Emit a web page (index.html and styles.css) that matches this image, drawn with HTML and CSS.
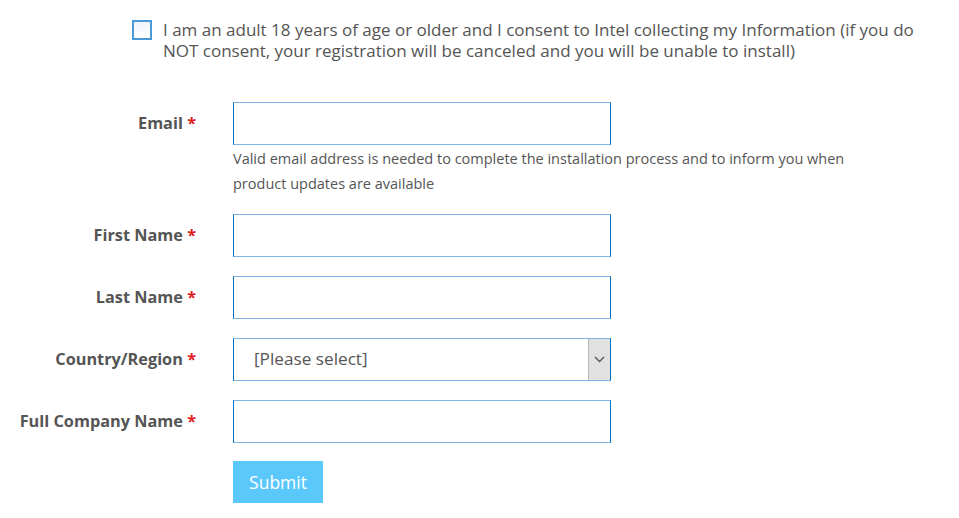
FILE: index.html
```html
<!DOCTYPE html>
<html>
<head>
<meta charset="utf-8">
<link rel="stylesheet" href="styles.css">
</head>
<body>
<div class="page">
  <label class="consent">
    <span class="checkbox"></span>
    <span class="consent-text">I am an adult 18 years of age or older and I consent to Intel collecting my Information (if you do NOT consent, your registration will be canceled and you will be unable to install)</span>
  </label>

  <form class="form">
    <div class="row">
      <div class="label">Email <span class="req">*</span></div>
      <div class="field">
        <input class="input" type="text">
        <p class="help">Valid email address is needed to complete the installation process and to inform you when product updates are available</p>
      </div>
    </div>
    <div class="row">
      <div class="label">First Name <span class="req">*</span></div>
      <div class="field"><input class="input" type="text"></div>
    </div>
    <div class="row">
      <div class="label">Last Name <span class="req">*</span></div>
      <div class="field"><input class="input" type="text"></div>
    </div>
    <div class="row">
      <div class="label">Country/Region <span class="req">*</span></div>
      <div class="field">
        <div class="select">
          <span class="select-value">[Please select]</span>
          <span class="select-arrow">
            <svg width="11" height="7" viewBox="0 0 11 7"><path d="M1 1l4.5 4.5L10 1" fill="none" stroke="#555" stroke-width="1.3"/></svg>
          </span>
        </div>
      </div>
    </div>
    <div class="row">
      <div class="label">Full Company Name <span class="req">*</span></div>
      <div class="field"><input class="input" type="text"></div>
    </div>
    <div class="row">
      <div class="label"></div>
      <div class="field"><button class="submit" type="button">Submit</button></div>
    </div>
  </form>
</div>
</body>
</html>
```

FILE: styles.css
```css
* { box-sizing: border-box; }
html, body {
  margin: 0;
  padding: 0;
  background: #fff;
}
body {
  font-family: "Open Sans", "Noto Sans", sans-serif;
  color: #555;
}
.page {
  padding-top: 20px;
}
.consent {
  display: flex;
  align-items: flex-start;
  padding-left: 132px;
  gap: 11px;
}
.checkbox {
  flex: none;
  width: 20px;
  height: 20px;
  border: 2px solid #4a9ad8;
  background: linear-gradient(#eef4fb, #fff);
}
.consent-text {
  width: 770px;
  font-size: 17px;
  line-height: 21px;
  margin-top: -1px;
}
.form {
  margin-top: 41px;
  display: flex;
  flex-direction: column;
  gap: 19px;
}
.row {
  display: flex;
  align-items: flex-start;
}
.label {
  width: 196px;
  flex: none;
  text-align: right;
  font-weight: 700;
  font-size: 16.3px;
  height: 43px;
  line-height: 42px;
  white-space: nowrap;
  color: #555;
}
.req { color: #e0201f; }
.field {
  margin-left: 37px;
  width: 378px;
}
.input {
  display: block;
  width: 378px;
  height: 43px;
  margin: 0;
  border: 1px solid;
  border-color: #7fb4e2 #0071c5;
  background: #fff;
  outline: none;
}
.help {
  margin: 0 0 -1px;
  width: 660px;
  font-size: 14.5px;
  line-height: 25px;
  padding-top: 1px;
  color: #555;
}
.select {
  display: flex;
  width: 378px;
  height: 43px;
  border: 1px solid;
  border-color: #7fb4e2 #0071c5;
  align-items: stretch;
}
.select-value {
  flex: 1;
  padding-left: 20px;
  font-size: 17.2px;
  line-height: 40px;
  color: #555;
}
.select-arrow {
  width: 22px;
  background: #e1e1e1;
  border-left: 1px solid #b8b8b8;
  display: flex;
  align-items: center;
  justify-content: center;
}
.submit {
  width: 90px;
  height: 42px;
  margin-top: -1px;
  border: 0;
  background: #5bc8fb;
  color: #fff;
  font-family: "Open Sans", "Noto Sans", sans-serif;
  font-size: 17.5px;
  padding: 0;
}
```
